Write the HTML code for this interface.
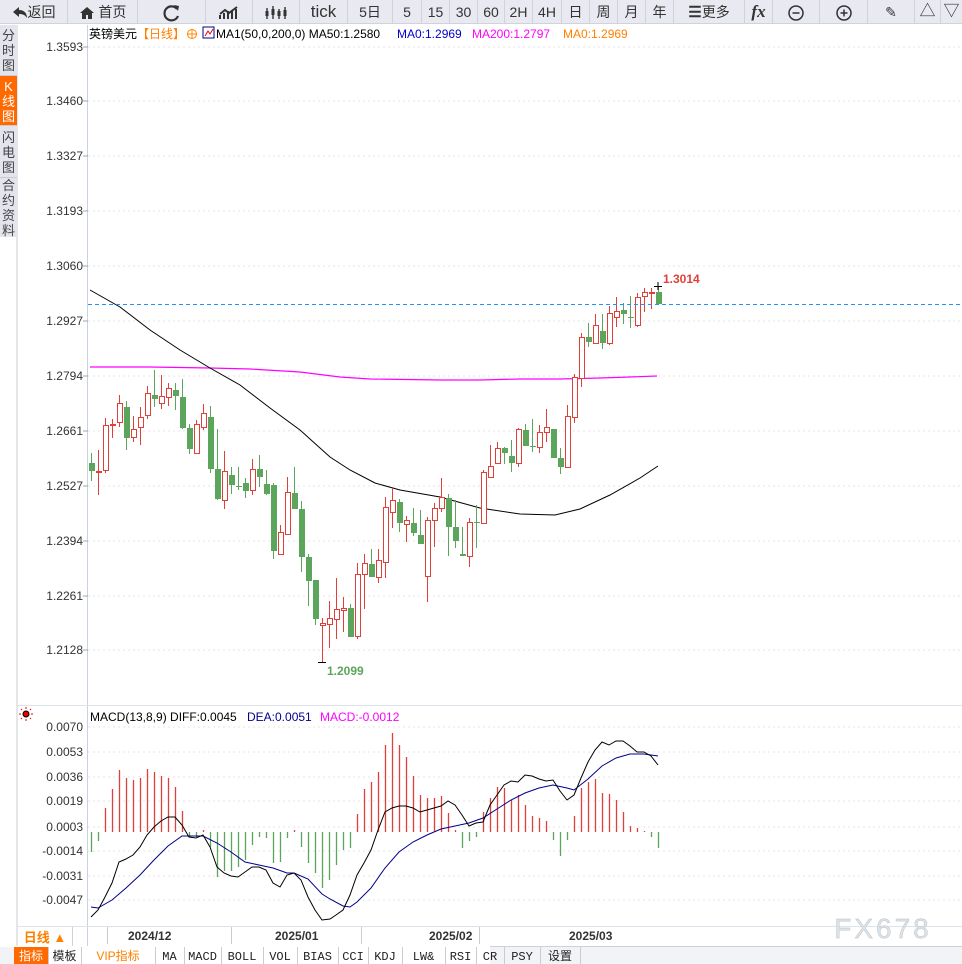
<!DOCTYPE html>
<html><head><meta charset="utf-8">
<style>
*{margin:0;padding:0;box-sizing:border-box}
body{width:962px;height:964px;overflow:hidden;background:#fff;font-family:"Liberation Sans","Noto Sans CJK SC",sans-serif;position:relative}
.tb{position:absolute;left:0;top:0;width:962px;height:24px;background:#e9eaf1;border-bottom:1px solid #d0d3dc}
.tb>div{position:absolute;top:0;height:24px;line-height:24px;text-align:center;font-size:14px;color:#333;border-right:1px solid #d0d3dc}
.tb svg{position:static;vertical-align:middle}
.side{position:absolute;left:0;top:25px;width:17px;height:212px;background:#e3e4ec}
.side div{font-size:13px;line-height:15px;color:#444;text-align:center;border-bottom:1px solid #c9ccd6}
.side .on{background:#ff6a00;color:#fff}
svg{position:absolute;left:0;top:0}
</style></head><body>
<div class="tb">
<div style="left:0;width:68px"><svg width="16" height="14"><path d="M1 6l6-5v3c5 0 8 3 8 8-2-3-4-4-8-4v3z" fill="#333"/></svg>返回</div>
<div style="left:68px;width:70px"><svg width="16" height="14"><path d="M1 7l7-6 7 6h-2v6h-4v-4h-2v4h-4v-6z" fill="#333"/></svg> 首页</div>
<div style="left:138px;width:68px"><svg width="20" height="20"><path d="M15 6a7 7 0 1 0 1 7" fill="none" stroke="#333" stroke-width="2.2"/><path d="M12 2l5 1-1 5z" fill="#333"/></svg></div>
<div style="left:206px;width:47px"><svg width="47" height="24"><path d="M14 18v-4M18 18v-6M22 18v-8M26 18v-9M30 18v-10M14 13l5-4 4 3 8-6" stroke="#333" stroke-width="2" fill="none"/></svg></div>
<div style="left:253px;width:47px"><svg width="47" height="24"><g stroke="#333" stroke-width="1.4"><path d="M14 7v11M20 5v13M26 8v10M32 6v12"/></g><g fill="#333"><rect x="12.5" y="10" width="3" height="5"/><rect x="18.5" y="8" width="3" height="6"/><rect x="24.5" y="10" width="3" height="5"/><rect x="30.5" y="9" width="3" height="6"/></g></svg></div>
<div style="left:300px;width:48px;font-size:17px">tick</div>
<div style="left:348px;width:45px">5日</div>
<div style="left:393px;width:29px">5</div>
<div style="left:422px;width:28px">15</div>
<div style="left:450px;width:28px">30</div>
<div style="left:478px;width:27px">60</div>
<div style="left:505px;width:28px">2H</div>
<div style="left:533px;width:29px">4H</div>
<div style="left:562px;width:28px">日</div>
<div style="left:590px;width:28px">周</div>
<div style="left:618px;width:28px">月</div>
<div style="left:646px;width:28px">年</div>
<div style="left:674px;width:71px"><b style="font-size:15px">☰</b>更多</div>
<div style="left:745px;width:28px;font-style:italic;font-weight:bold;font-family:'Liberation Serif',serif;font-size:17px">fx</div>
<div style="left:773px;width:47px"><svg width="18" height="18"><circle cx="9" cy="9" r="7" fill="none" stroke="#333" stroke-width="1.5"/><path d="M5.5 9h7" stroke="#333" stroke-width="1.5"/></svg></div>
<div style="left:820px;width:48px"><svg width="18" height="18"><circle cx="9" cy="9" r="7" fill="none" stroke="#333" stroke-width="1.5"/><path d="M5.5 9h7M9 5.5v7" stroke="#333" stroke-width="1.5"/></svg></div>
<div style="left:868px;width:47px">✎</div>
<div style="left:915px;width:26px;font-size:16px">△</div>
<div style="left:941px;width:21px;font-size:16px;border:none">▽</div>
</div>
<div class="side">
<div style="height:51px;padding-top:3px">分<br>时<br>图</div>
<div class="on" style="height:50px;padding-top:3px">K<br>线<br>图</div>
<div style="height:52px;padding-top:4px">闪<br>电<br>图</div>
<div style="height:59px;padding-top:0px;border:none">合<br>约<br>资<br>料</div>
</div>
<svg id="c" width="962" height="964" style="top:0;z-index:-1"></svg>
<script>
var R='#e0403a',G='#5ca55c';
var C=[[91,463,471,453,481,0],[98,471,471,450,495,1],[105,425,470,418,473,1],[112,424,424,419,438,1],[119,403,422,395,427,1],[126,407,438,401,450,0],[133,429,437,416,442,1],[140,417,427,407,445,1],[147,393,415,386,419,1],[154,395,399,370,407,0],[161,396,403,375,409,1],[168,388,397,383,406,1],[175,390,396,383,410,0],[182,397,428,379,429,0],[189,428,449,424,454,0],[196,424,453,420,453,1],[203,413,427,404,430,1],[210,417,469,406,473,0],[217,469,499,429,500,0],[224,471,500,451,509,1],[231,475,485,467,494,0],[238,486,487,467,490,0],[245,483,491,478,498,0],[252,469,490,459,495,1],[259,469,477,455,487,0],[266,484,494,470,495,0],[273,485,551,483,559,0],[280,532,554,525,554,1],[287,492,534,477,534,1],[294,493,509,467,509,0],[301,509,557,501,572,0],[308,557,581,554,606,0],[315,580,619,580,625,0],[322,623,625,618,663,1],[329,618,624,601,648,1],[336,609,619,578,639,1],[343,608,610,597,632,1],[350,608,637,604,637,0],[357,574,636,563,639,1],[364,563,574,554,609,1],[371,564,577,549,577,0],[378,560,577,549,583,1],[385,507,562,497,578,1],[392,500,512,488,528,1],[399,502,523,499,532,0],[406,520,524,516,542,1],[413,523,533,508,536,0],[420,535,544,510,544,0],[427,520,576,517,602,1],[434,508,520,503,547,1],[441,497,508,478,512,1],[448,498,527,494,556,0],[455,527,541,500,548,0],[462,554,556,527,556,0],[469,522,556,518,567,1],[476,522,523,505,548,0],[483,472,523,470,523,1],[490,466,477,445,477,1],[497,448,463,442,464,1],[504,448,453,447,464,0],[511,456,463,440,472,0],[518,429,463,428,467,1],[525,430,446,424,446,0],[532,446,447,419,452,0],[539,432,447,425,453,1],[546,427,432,409,442,1],[553,429,458,429,458,0],[560,458,467,448,474,0],[567,416,467,405,467,1],[574,377,417,374,423,1],[581,337,378,333,387,1],[588,337,342,323,347,0],[595,325,343,314,343,1],[602,331,343,314,349,0],[609,313,343,306,345,1],[616,311,317,297,327,1],[623,310,314,303,324,0],[630,317,318,296,328,0],[637,297,325,293,327,1],[644,292,296,288,312,1],[651,292,293,288,309,1],[658,292,304,286,304,0]];
var H=[852,841,808,789,770,778,780,778,769,772,776,778,787,811,836,837,830,847,877,871,871,867,860,845,837,838,863,862,838,830,847,863,873,888,880,865,850,848,814,789,782,772,745,733,745,757,776,795,798,798,796,813,830,848,841,837,812,798,787,788,800,795,805,816,818,821,840,856,840,816,788,782,779,793,794,800,812,826,828,831,837,848];
var s='';
function t(x,y,txt,col,sz,anc,ext){s+='<text x="'+x+'" y="'+y+'" fill="'+(col||'#333')+'" font-size="'+(sz||12)+'" text-anchor="'+(anc||'start')+'" '+(ext||'')+'>'+txt+'</text>';}
s+='<line x1="17" y1="25" x2="17" y2="946" stroke="#c9ccd6"/>';
s+='<line x1="87.5" y1="25" x2="87.5" y2="946" stroke="#c9d3dd"/>';
s+='<line x1="17" y1="705.5" x2="962" y2="705.5" stroke="#dde3ea"/>';
var py=[[47,'1.3593'],[101,'1.3460'],[156,'1.3327'],[211,'1.3193'],[266,'1.3060'],[321,'1.2927'],[376,'1.2794'],[431,'1.2661'],[486,'1.2527'],[541,'1.2394'],[596,'1.2261'],[650,'1.2128']];
py.forEach(function(p){s+='<line x1="88" y1="'+p[0]+'" x2="962" y2="'+p[0]+'" stroke="#e4e4e4" stroke-dasharray="2,3"/>';s+='<line x1="83" y1="'+p[0]+'" x2="88" y2="'+p[0]+'" stroke="#9aa"/>';t(83,p[0]+4,p[1],'#333',12,'end');});
var my=[[727,'0.0070'],[752,'0.0053'],[777,'0.0036'],[801,'0.0019'],[827,'0.0003'],[851,'-0.0014'],[876,'-0.0031'],[900,'-0.0047']];
my.forEach(function(p){s+='<line x1="88" y1="'+p[0]+'" x2="962" y2="'+p[0]+'" stroke="#e4e4e4" stroke-dasharray="2,3"/>';t(83,p[0]+4,p[1],'#333',12,'end');});
s+='<polyline fill="none" stroke="#f0f" stroke-width="1.2" points="90,367 150,367 210,368 250,369 300,372 340,377 370,379 440,380 480,380 520,379 560,379 600,378 630,377 657,376"/>';
s+='<polyline fill="none" stroke="#000" points="90,290 120,307 150,330 180,350 210,368 240,385 270,408 300,430 330,457 350,470 375,483 400,490 440,497 480,508 520,514 555,515 580,509 610,495 640,478 658,466"/>';
C.forEach(function(c){var col=c[5]?R:G;s+='<line x1="'+c[0]+'.5" y1="'+c[3]+'" x2="'+c[0]+'.5" y2="'+c[4]+'" stroke="'+col+'"/>';
var h=Math.max(c[2]-c[1],1);
if(c[5])s+='<rect x="'+(c[0]-2)+'.5" y="'+c[1]+'.5" width="5" height="'+h+'" fill="#fff" stroke="'+R+'"/>';
else s+='<rect x="'+(c[0]-2)+'" y="'+c[1]+'" width="6" height="'+h+'" fill="'+G+'"/>';});
s+='<line x1="88" y1="304.5" x2="962" y2="304.5" stroke="#1e90ff" stroke-dasharray="4,3"/>';
s+='<path d="M654 286.5h8M658 282v8M318 662.5h8" stroke="#000"/>';
t(663,283,'1.3014',R,12,'start','font-weight="bold"');
t(327,675,'1.2099',G,12,'start','font-weight="bold"');
H.forEach(function(y,i){var x=C[i][0];s+='<line x1="'+x+'.5" y1="832" x2="'+x+'.5" y2="'+y+'" stroke="'+(y<832?R:G)+'" stroke-width="1.3"/>';});
s+='<polyline fill="none" stroke="#00008b" points="91,907 98,908 112,900 126,888 140,875 154,860 168,846 182,836 196,836 203,836 217,843 231,852 245,862 259,865 273,868 287,873 294,873 308,879 322,894 330,899 343,906 350,907 357,902 371,888 385,868 399,852 413,842 427,835 441,829 455,826 469,823 483,818 497,809 511,800 525,793 539,788 553,785 567,788 574,790 588,779 602,766 616,758 630,754 644,754 651,755 658,756"/>';
s+='<polyline fill="none" stroke="#000" points="91,917 98,910 105,897 112,883 119,862 126,859 133,855 140,847 147,835 154,827 161,821 168,817 175,817 182,825 189,837 196,838 203,835 210,847 217,867 224,873 231,876 238,877 245,872 252,867 259,867 266,870 273,883 280,887 287,875 294,873 301,880 308,897 315,910 322,920 330,919 336,915 343,910 350,895 357,875 364,863 371,850 378,830 385,812 392,808 399,806 406,806 413,808 420,812 427,810 434,808 441,806 448,801 455,805 462,815 469,826 476,823 483,822 490,805 497,795 504,785 511,781 518,782 525,775 532,776 539,779 546,781 553,780 560,791 567,800 574,795 581,778 588,762 595,750 602,742 609,745 616,741 623,741 630,746 637,752 644,752 651,756 658,765"/>';
t(89,38,'英镑美元','#000',12);t(137,38,'【日线】','#ff7f00',12);
s+='<circle cx="192" cy="34" r="4.5" fill="none" stroke="#f80"/><path d="M187 34h10M192 29v10" stroke="#f80"/>';
s+='<rect x="203" y="27" width="11" height="11" fill="#fff" stroke="#00008b"/><path d="M205 36l3-5 2 3 3-5" stroke="#e00" fill="none"/>';
t(216,38,'MA1(50,0,200,0) MA50:1.2580','#000',12);t(397,38,'MA0:1.2969','#00c',12);t(472,38,'MA200:1.2797','#f0f',12);t(563,38,'MA0:1.2969','#ff7f00',12);
s+='<circle cx="26" cy="714" r="3" fill="#e00" stroke="#000"/><path d="M26 707v2M26 719v2M19 714h2M31 714h2M21 709l1 1M31 709l-1 1M21 719l1-1M31 719l-1-1" stroke="#e00"/>';
t(90,721,'MACD(13,8,9) DIFF:0.0045','#000',12);t(247,721,'DEA:0.0051','#00008b',12);t(320,721,'MACD:-0.0012','#f0f',12);
s+='<line x1="17" y1="926.5" x2="962" y2="926.5" stroke="#dde3ea"/><line x1="17" y1="946.5" x2="962" y2="946.5" stroke="#c9d3dd"/>';
s+='<line x1="72.5" y1="927" x2="72.5" y2="946" stroke="#c9d3dd"/>';
t(45,942,'日线 ▲','#ff7f00',13,'middle','font-weight="bold"');
[[107,128,'2024/12'],[231,275,'2025/01'],[361,429,'2025/02'],[479,569,'2025/03']].forEach(function(d){s+='<line x1="'+d[0]+'.5" y1="927" x2="'+d[0]+'.5" y2="944" stroke="#ccc"/>';t(d[1],940,d[2],'#333',12,'start','font-weight="bold"');});
t(883,938,'FX678','#d6e4f2',28,'middle','letter-spacing="3" stroke="#c8b8a8" stroke-width="0.4"');
s+='<rect x="0" y="947" width="962" height="17" fill="#f2f3f6"/><rect x="14" y="946" width="476" height="18" fill="#fff"/>';
var tabs=[[14,48,'指标'],[48,81,'模板'],[81,155,'VIP指标'],[155,184,'MA'],[184,221,'MACD'],[221,263,'BOLL'],[263,297,'VOL'],[297,338,'BIAS'],[338,368,'CCI'],[368,402,'KDJ'],[402,445,'LW&amp;'],[445,476,'RSI'],[476,504,'CR'],[504,540,'PSY'],[540,580,'设置']];
tabs.forEach(function(b,i){if(i==0)s+='<rect x="14" y="947" width="34" height="17" fill="#ff6a00"/>';s+='<line x1="'+b[1]+'.5" y1="947" x2="'+b[1]+'.5" y2="964" stroke="#ccc"/>';t((b[0]+b[1])/2,960,b[2],i==0?'#fff':(i==2?'#ff7f00':'#222'),12,'middle',i>2&&i<14?'font-family="Liberation Mono,monospace" font-size="11"':'');});
document.getElementById('c').innerHTML=s;
</script>
</body></html>
